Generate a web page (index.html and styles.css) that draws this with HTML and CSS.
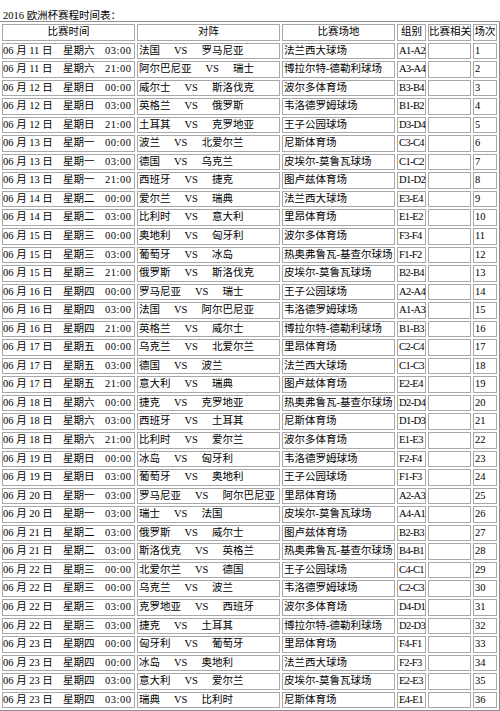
FILE: index.html
```html
<!DOCTYPE html>
<html lang="zh-CN">
<head>
<meta charset="utf-8">
<title>2016欧洲杯赛程时间表</title>
<link rel="stylesheet" href="styles.css">
</head>
<body>
<div class="title">2016 欧洲杯赛程时间表：</div>
<table class="sched">
<thead>
<tr>
<th class="c1">比赛时间</th>
<th class="c2">对阵</th>
<th class="c3">比赛场地</th>
<th class="c4">组别</th>
<th class="c5">比赛相关</th>
<th class="c6">场次</th>
</tr>
</thead>
<tbody>
<tr><td class="t"><span class="d">06 月 11 日</span><span class="w">星期六</span><span class="h">03:00</span></td><td class="m">法国<span class="vs">VS</span>罗马尼亚</td><td class="v">法兰西大球场</td><td class="g">A1-A2</td><td></td><td class="n">1</td></tr>
<tr><td class="t"><span class="d">06 月 11 日</span><span class="w">星期六</span><span class="h">21:00</span></td><td class="m">阿尔巴尼亚<span class="vs">VS</span>瑞士</td><td class="v">博拉尔特-德勒利球场</td><td class="g">A3-A4</td><td></td><td class="n">2</td></tr>
<tr><td class="t"><span class="d">06 月 12 日</span><span class="w">星期日</span><span class="h">00:00</span></td><td class="m">威尔士<span class="vs">VS</span>斯洛伐克</td><td class="v">波尔多体育场</td><td class="g">B3-B4</td><td></td><td class="n">3</td></tr>
<tr><td class="t"><span class="d">06 月 12 日</span><span class="w">星期日</span><span class="h">03:00</span></td><td class="m">英格兰<span class="vs">VS</span>俄罗斯</td><td class="v">韦洛德罗姆球场</td><td class="g">B1-B2</td><td></td><td class="n">4</td></tr>
<tr><td class="t"><span class="d">06 月 12 日</span><span class="w">星期日</span><span class="h">21:00</span></td><td class="m">土耳其<span class="vs">VS</span>克罗地亚</td><td class="v">王子公园球场</td><td class="g">D3-D4</td><td></td><td class="n">5</td></tr>
<tr><td class="t"><span class="d">06 月 13 日</span><span class="w">星期一</span><span class="h">00:00</span></td><td class="m">波兰<span class="vs">VS</span>北爱尔兰</td><td class="v">尼斯体育场</td><td class="g">C3-C4</td><td></td><td class="n">6</td></tr>
<tr><td class="t"><span class="d">06 月 13 日</span><span class="w">星期一</span><span class="h">03:00</span></td><td class="m">德国<span class="vs">VS</span>乌克兰</td><td class="v">皮埃尔-莫鲁瓦球场</td><td class="g">C1-C2</td><td></td><td class="n">7</td></tr>
<tr><td class="t"><span class="d">06 月 13 日</span><span class="w">星期一</span><span class="h">21:00</span></td><td class="m">西班牙<span class="vs">VS</span>捷克</td><td class="v">图卢兹体育场</td><td class="g">D1-D2</td><td></td><td class="n">8</td></tr>
<tr><td class="t"><span class="d">06 月 14 日</span><span class="w">星期二</span><span class="h">00:00</span></td><td class="m">爱尔兰<span class="vs">VS</span>瑞典</td><td class="v">法兰西大球场</td><td class="g">E3-E4</td><td></td><td class="n">9</td></tr>
<tr><td class="t"><span class="d">06 月 14 日</span><span class="w">星期二</span><span class="h">03:00</span></td><td class="m">比利时<span class="vs">VS</span>意大利</td><td class="v">里昂体育场</td><td class="g">E1-E2</td><td></td><td class="n">10</td></tr>
<tr><td class="t"><span class="d">06 月 15 日</span><span class="w">星期三</span><span class="h">00:00</span></td><td class="m">奥地利<span class="vs">VS</span>匈牙利</td><td class="v">波尔多体育场</td><td class="g">F3-F4</td><td></td><td class="n">11</td></tr>
<tr><td class="t"><span class="d">06 月 15 日</span><span class="w">星期三</span><span class="h">03:00</span></td><td class="m">葡萄牙<span class="vs">VS</span>冰岛</td><td class="v">热奥弗鲁瓦-基查尔球场</td><td class="g">F1-F2</td><td></td><td class="n">12</td></tr>
<tr><td class="t"><span class="d">06 月 15 日</span><span class="w">星期三</span><span class="h">21:00</span></td><td class="m">俄罗斯<span class="vs">VS</span>斯洛伐克</td><td class="v">皮埃尔-莫鲁瓦球场</td><td class="g">B2-B4</td><td></td><td class="n">13</td></tr>
<tr><td class="t"><span class="d">06 月 16 日</span><span class="w">星期四</span><span class="h">00:00</span></td><td class="m">罗马尼亚<span class="vs">VS</span>瑞士</td><td class="v">王子公园球场</td><td class="g">A2-A4</td><td></td><td class="n">14</td></tr>
<tr><td class="t"><span class="d">06 月 16 日</span><span class="w">星期四</span><span class="h">03:00</span></td><td class="m">法国<span class="vs">VS</span>阿尔巴尼亚</td><td class="v">韦洛德罗姆球场</td><td class="g">A1-A3</td><td></td><td class="n">15</td></tr>
<tr><td class="t"><span class="d">06 月 16 日</span><span class="w">星期四</span><span class="h">21:00</span></td><td class="m">英格兰<span class="vs">VS</span>威尔士</td><td class="v">博拉尔特-德勒利球场</td><td class="g">B1-B3</td><td></td><td class="n">16</td></tr>
<tr><td class="t"><span class="d">06 月 17 日</span><span class="w">星期五</span><span class="h">00:00</span></td><td class="m">乌克兰<span class="vs">VS</span>北爱尔兰</td><td class="v">里昂体育场</td><td class="g">C2-C4</td><td></td><td class="n">17</td></tr>
<tr><td class="t"><span class="d">06 月 17 日</span><span class="w">星期五</span><span class="h">03:00</span></td><td class="m">德国<span class="vs">VS</span>波兰</td><td class="v">法兰西大球场</td><td class="g">C1-C3</td><td></td><td class="n">18</td></tr>
<tr><td class="t"><span class="d">06 月 17 日</span><span class="w">星期五</span><span class="h">21:00</span></td><td class="m">意大利<span class="vs">VS</span>瑞典</td><td class="v">图卢兹体育场</td><td class="g">E2-E4</td><td></td><td class="n">19</td></tr>
<tr><td class="t"><span class="d">06 月 18 日</span><span class="w">星期六</span><span class="h">00:00</span></td><td class="m">捷克<span class="vs">VS</span>克罗地亚</td><td class="v">热奥弗鲁瓦-基查尔球场</td><td class="g">D2-D4</td><td></td><td class="n">20</td></tr>
<tr><td class="t"><span class="d">06 月 18 日</span><span class="w">星期六</span><span class="h">03:00</span></td><td class="m">西班牙<span class="vs">VS</span>土耳其</td><td class="v">尼斯体育场</td><td class="g">D1-D3</td><td></td><td class="n">21</td></tr>
<tr><td class="t"><span class="d">06 月 18 日</span><span class="w">星期六</span><span class="h">21:00</span></td><td class="m">比利时<span class="vs">VS</span>爱尔兰</td><td class="v">波尔多体育场</td><td class="g">E1-E3</td><td></td><td class="n">22</td></tr>
<tr><td class="t"><span class="d">06 月 19 日</span><span class="w">星期日</span><span class="h">00:00</span></td><td class="m">冰岛<span class="vs">VS</span>匈牙利</td><td class="v">韦洛德罗姆球场</td><td class="g">F2-F4</td><td></td><td class="n">23</td></tr>
<tr><td class="t"><span class="d">06 月 19 日</span><span class="w">星期日</span><span class="h">03:00</span></td><td class="m">葡萄牙<span class="vs">VS</span>奥地利</td><td class="v">王子公园球场</td><td class="g">F1-F3</td><td></td><td class="n">24</td></tr>
<tr><td class="t"><span class="d">06 月 20 日</span><span class="w">星期一</span><span class="h">03:00</span></td><td class="m">罗马尼亚<span class="vs">VS</span>阿尔巴尼亚</td><td class="v">里昂体育场</td><td class="g">A2-A3</td><td></td><td class="n">25</td></tr>
<tr><td class="t"><span class="d">06 月 20 日</span><span class="w">星期一</span><span class="h">03:00</span></td><td class="m">瑞士<span class="vs">VS</span>法国</td><td class="v">皮埃尔-莫鲁瓦球场</td><td class="g">A4-A1</td><td></td><td class="n">26</td></tr>
<tr><td class="t"><span class="d">06 月 21 日</span><span class="w">星期二</span><span class="h">03:00</span></td><td class="m">俄罗斯<span class="vs">VS</span>威尔士</td><td class="v">图卢兹体育场</td><td class="g">B2-B3</td><td></td><td class="n">27</td></tr>
<tr><td class="t"><span class="d">06 月 21 日</span><span class="w">星期二</span><span class="h">03:00</span></td><td class="m">斯洛伐克<span class="vs">VS</span>英格兰</td><td class="v">热奥弗鲁瓦-基查尔球场</td><td class="g">B4-B1</td><td></td><td class="n">28</td></tr>
<tr><td class="t"><span class="d">06 月 22 日</span><span class="w">星期三</span><span class="h">00:00</span></td><td class="m">北爱尔兰<span class="vs">VS</span>德国</td><td class="v">王子公园球场</td><td class="g">C4-C1</td><td></td><td class="n">29</td></tr>
<tr><td class="t"><span class="d">06 月 22 日</span><span class="w">星期三</span><span class="h">00:00</span></td><td class="m">乌克兰<span class="vs">VS</span>波兰</td><td class="v">韦洛德罗姆球场</td><td class="g">C2-C3</td><td></td><td class="n">30</td></tr>
<tr><td class="t"><span class="d">06 月 22 日</span><span class="w">星期三</span><span class="h">03:00</span></td><td class="m">克罗地亚<span class="vs">VS</span>西班牙</td><td class="v">波尔多体育场</td><td class="g">D4-D1</td><td></td><td class="n">31</td></tr>
<tr><td class="t"><span class="d">06 月 22 日</span><span class="w">星期三</span><span class="h">03:00</span></td><td class="m">捷克<span class="vs">VS</span>土耳其</td><td class="v">博拉尔特-德勒利球场</td><td class="g">D2-D3</td><td></td><td class="n">32</td></tr>
<tr><td class="t"><span class="d">06 月 23 日</span><span class="w">星期四</span><span class="h">00:00</span></td><td class="m">匈牙利<span class="vs">VS</span>葡萄牙</td><td class="v">里昂体育场</td><td class="g">F4-F1</td><td></td><td class="n">33</td></tr>
<tr><td class="t"><span class="d">06 月 23 日</span><span class="w">星期四</span><span class="h">00:00</span></td><td class="m">冰岛<span class="vs">VS</span>奥地利</td><td class="v">法兰西大球场</td><td class="g">F2-F3</td><td></td><td class="n">34</td></tr>
<tr><td class="t"><span class="d">06 月 23 日</span><span class="w">星期四</span><span class="h">03:00</span></td><td class="m">意大利<span class="vs">VS</span>爱尔兰</td><td class="v">皮埃尔-莫鲁瓦球场</td><td class="g">E2-E3</td><td></td><td class="n">35</td></tr>
<tr><td class="t"><span class="d">06 月 23 日</span><span class="w">星期四</span><span class="h">03:00</span></td><td class="m">瑞典<span class="vs">VS</span>比利时</td><td class="v">尼斯体育场</td><td class="g">E4-E1</td><td></td><td class="n">36</td></tr>
</tbody>
</table>
</body>
</html>
```

FILE: styles.css
```css
html, body {
  margin: 0;
  padding: 0;
  background: #ffffff;
  overflow: hidden;
}

body {
  font-family: "Liberation Serif", "Noto Sans CJK SC", serif;
  font-size: 10.5px;
  color: #000000;
}

.title {
  height: 21px;
  box-sizing: border-box;
  padding: 9px 0 0 3px;
  line-height: 14px;
  white-space: nowrap;
}

.sched {
  table-layout: fixed;
  width: 501px;
  margin-left: -1px;
  border: 1px solid #8e8e8e;
  border-spacing: 2px;
  border-collapse: separate;
}

.sched th,
.sched td {
  border: 1px solid #a8a8a8;
  height: 14.55px;
  line-height: 14.55px;
  padding: 0 0 0 1px;
  white-space: nowrap;
  overflow: visible;
  text-align: left;
  font-weight: normal;
  vertical-align: middle;
}

.sched th {
  text-align: center;
  padding: 0;
}

.c1 { width: 131px; }
.c2 { width: 141px; }
.c3 { width: 111px; }
.c4 { width: 27px; }
.c5 { width: 41px; }
.c6 { width: 22px; }

.sched td.t {
  padding-left: 0;
}

.d {
  display: inline-block;
  width: 60px;
}

.w {
  display: inline-block;
  width: 42px;
}

.h {
  display: inline-block;
  letter-spacing: 0.5px;
}

.vs {
  margin: 0 14px;
}

.sched td.g {
  padding-left: 1px;
  letter-spacing: -0.6px;
}
```
